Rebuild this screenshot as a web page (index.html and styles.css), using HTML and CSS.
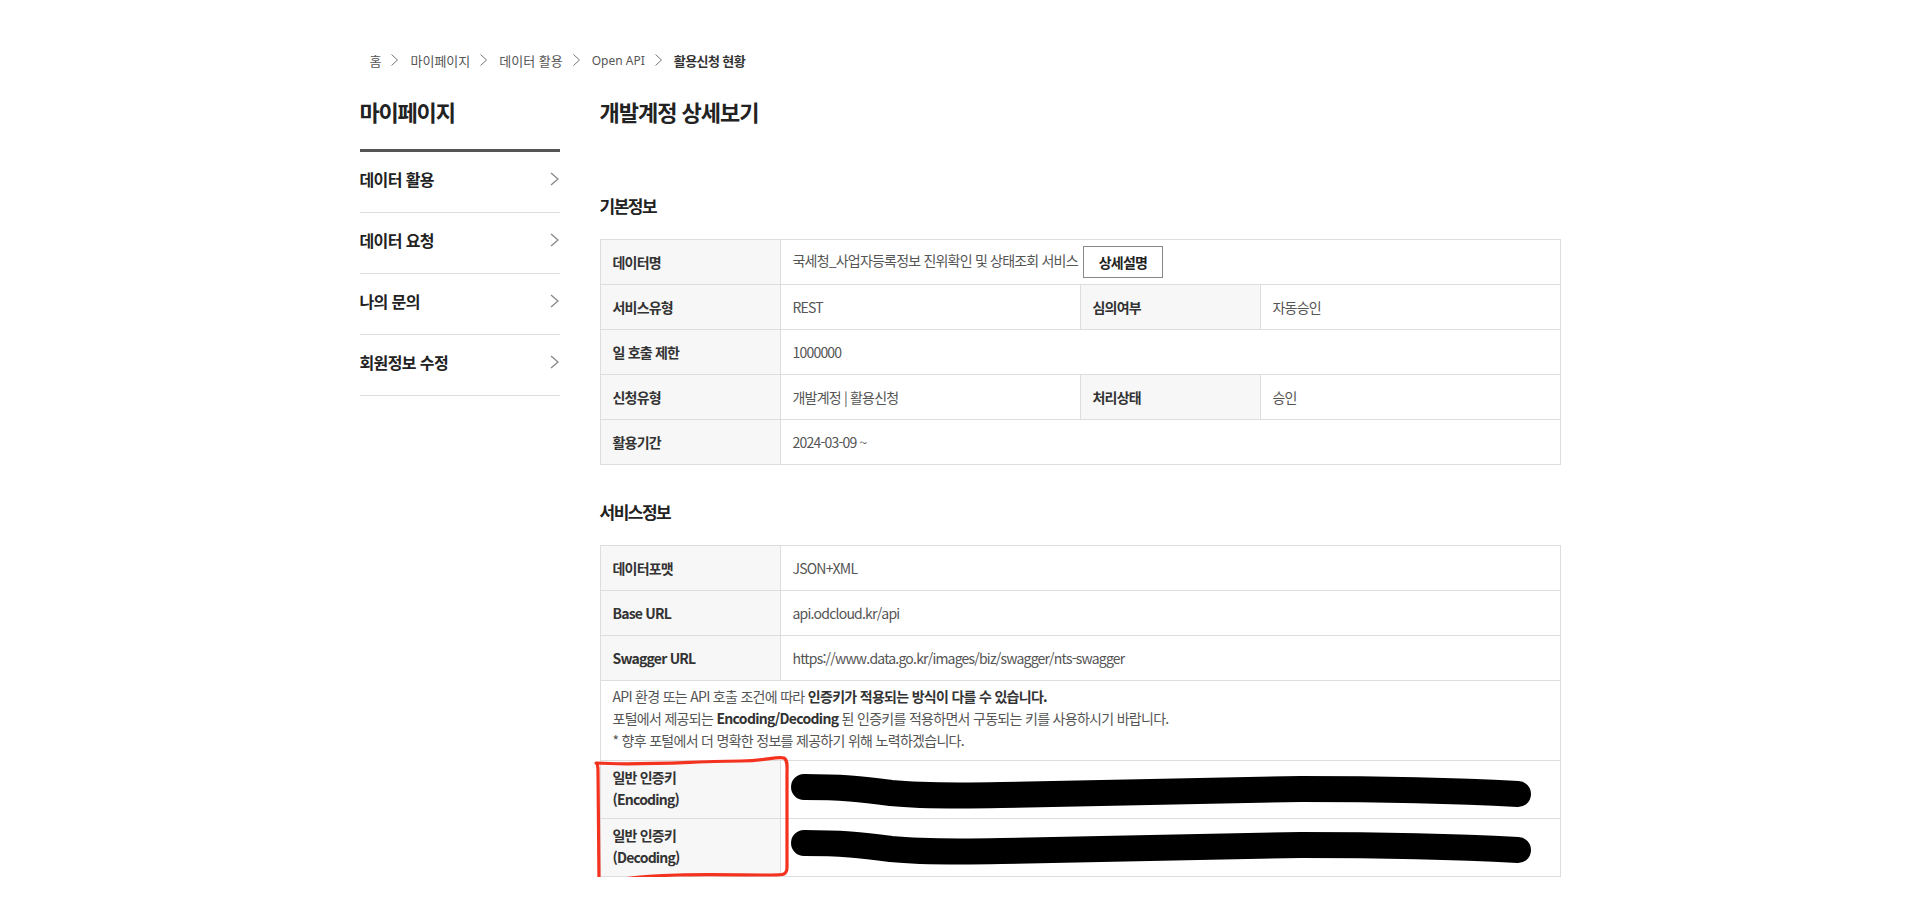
FILE: index.html
```html
<!DOCTYPE html>
<html lang="ko">
<head>
<meta charset="utf-8">
<title>개발계정 상세보기</title>
<link rel="stylesheet" href="styles.css">
</head>
<body>
<div class="wrap">
  <nav class="crumbs">
    <span>홈</span>
    <svg class="sep" viewBox="0 0 7 12"><path d="M0.5 0.5 L6.5 6 L0.5 11.5"/></svg>
    <span>마이페이지</span>
    <svg class="sep" viewBox="0 0 7 12"><path d="M0.5 0.5 L6.5 6 L0.5 11.5"/></svg>
    <span>데이터 활용</span>
    <svg class="sep" viewBox="0 0 7 12"><path d="M0.5 0.5 L6.5 6 L0.5 11.5"/></svg>
    <span class="latin">Open API</span>
    <svg class="sep" viewBox="0 0 7 12"><path d="M0.5 0.5 L6.5 6 L0.5 11.5"/></svg>
    <strong class="cur">활용신청 현황</strong>
  </nav>

  <div class="layout">
    <aside class="side">
      <h2 class="side-title">마이페이지</h2>
      <ul class="side-menu">
        <li><a href="#">데이터 활용<svg class="chev" viewBox="0 0 9 14"><path d="M1 1 L8 7 L1 13"/></svg></a></li>
        <li><a href="#">데이터 요청<svg class="chev" viewBox="0 0 9 14"><path d="M1 1 L8 7 L1 13"/></svg></a></li>
        <li><a href="#">나의 문의<svg class="chev" viewBox="0 0 9 14"><path d="M1 1 L8 7 L1 13"/></svg></a></li>
        <li><a href="#">회원정보 수정<svg class="chev" viewBox="0 0 9 14"><path d="M1 1 L8 7 L1 13"/></svg></a></li>
      </ul>
    </aside>

    <main class="main">
      <h1 class="page-title">개발계정 상세보기</h1>

      <h3 class="sec-title">기본정보</h3>
      <table class="info">
        <colgroup>
          <col class="c-label"><col class="c-val"><col class="c-label"><col class="c-val">
        </colgroup>
        <tbody>
          <tr>
            <th>데이터명</th>
            <td colspan="3">국세청_사업자등록정보 진위확인 및 상태조회 서비스 <button class="btn" type="button">상세설명</button></td>
          </tr>
          <tr>
            <th>서비스유형</th>
            <td>REST</td>
            <th>심의여부</th>
            <td>자동승인</td>
          </tr>
          <tr>
            <th>일 호출 제한</th>
            <td colspan="3">1000000</td>
          </tr>
          <tr>
            <th>신청유형</th>
            <td>개발계정 | 활용신청</td>
            <th>처리상태</th>
            <td>승인</td>
          </tr>
          <tr>
            <th>활용기간</th>
            <td colspan="3">2024-03-09 ~</td>
          </tr>
        </tbody>
      </table>

      <h3 class="sec-title next">서비스정보</h3>
      <div class="svc-wrap">
        <table class="info">
          <colgroup>
            <col class="c-label"><col class="c-wide">
          </colgroup>
          <tbody>
            <tr>
              <th>데이터포맷</th>
              <td>JSON+XML</td>
            </tr>
            <tr>
              <th>Base URL</th>
              <td>api.odcloud.kr/api</td>
            </tr>
            <tr>
              <th>Swagger URL</th>
              <td>https://www.data.go.kr/images/biz/swagger/nts-swagger</td>
            </tr>
            <tr>
              <td class="note" colspan="2">
                <p>API 환경 또는 API 호출 조건에 따라 <b>인증키가 적용되는 방식이 다를 수 있습니다.</b></p>
                <p>포털에서 제공되는 <b>Encoding/Decoding</b> 된 인증키를 적용하면서 구동되는 키를 사용하시기 바랍니다.</p>
                <p>* 향후 포털에서 더 명확한 정보를 제공하기 위해 노력하겠습니다.</p>
              </td>
            </tr>
            <tr class="key">
              <th>일반 인증키<br>(Encoding)</th>
              <td></td>
            </tr>
            <tr class="key">
              <th>일반 인증키<br>(Decoding)</th>
              <td></td>
            </tr>
          </tbody>
        </table>
        <svg class="marks" viewBox="0 0 960 345" aria-hidden="true">
          <path class="redact" d="M204,242 C241,242 261,244 291,248 C321,251 351,251 401,250 L701,244 C801,244 861,246 918,249"/>
          <path class="redact" transform="translate(0,56)" d="M204,242 C241,242 261,244 291,248 C321,251 351,251 401,250 L701,244 C801,244 861,246 918,249"/>
          <path class="circle" d="M-4,218 C40,221 100,216 141,216 C166,216 176,211 184,213 C188,215 187,222 187,230 L187,322 C187,330 184,330 171,330 C121,330 61,328 24,334 C6,338 0,341 -1,334 L-2,226 C-2,220 -3,218 -4,218 Z"/>
        </svg>
      </div>
    </main>
  </div>
</div>
</body>
</html>
```
FILE: styles.css
```css
* { box-sizing: border-box; }
html, body { margin: 0; padding: 0; background: #fff; }
body {
  font-family: "Noto Sans CJK KR", "Noto Sans", sans-serif;
  color: #333;
}
.wrap { width: 1200px; margin: 0 auto; }

/* breadcrumb */
.crumbs {
  display: flex;
  align-items: center;
  margin-top: 50px;
  height: 20px;
  padding-left: 10px;
  font-size: 13px;
  color: #555;
  letter-spacing: 0;
}
.crumbs .latin { font-family: "Noto Sans", "Noto Sans CJK KR", sans-serif; font-size: 12px; }
.crumbs .sep {
  width: 7px;
  height: 12px;
  margin: 0 12px 0 10px;
  fill: none;
  stroke: #777;
  stroke-width: 1;
}
.crumbs .cur { font-weight: 700; color: #333; letter-spacing: -0.6px; }

/* layout */
.layout { display: flex; gap: 40px; margin-top: 25px; }
.side { width: 200px; flex: none; }
.main { width: 960px; flex: none; }

/* sidebar */
.side-title {
  margin: 0;
  padding-bottom: 22px;
  border-bottom: 3px solid #555;
  font-size: 22px;
  line-height: 32px;
  font-weight: 700;
  letter-spacing: -1.2px;
  color: #222;
}
.side-menu { list-style: none; margin: 0; padding: 0; }
.side-menu li { border-bottom: 1px solid #ddd; }
.side-menu a {
  display: flex;
  justify-content: space-between;
  align-items: center;
  height: 60px;
  padding: 0 1px 6px 0;
  font-size: 16px;
  font-weight: 700;
  letter-spacing: -0.6px;
  color: #222;
  text-decoration: none;
}
.chev {
  width: 9px;
  height: 14px;
  fill: none;
  stroke: #8a8a8a;
  stroke-width: 1.4;
}

/* main */
.page-title {
  margin: 0;
  font-size: 22px;
  line-height: 32px;
  font-weight: 700;
  letter-spacing: -1px;
  color: #222;
}
.sec-title {
  margin: 67px 0 21px;
  font-size: 17px;
  line-height: 24px;
  font-weight: 700;
  letter-spacing: -1.5px;
  color: #222;
}
.sec-title.next { margin-top: 35px; }

/* tables */
.info {
  width: 960px;
  border-collapse: collapse;
  table-layout: fixed;
  font-size: 14px;
  letter-spacing: -0.8px;
}
.c-label { width: 180px; }
.c-val { width: 300px; }
.c-wide { width: 780px; }
.info th, .info td {
  border: 1px solid #ddd;
  height: 45px;
  padding: 0 12px;
  text-align: left;
  vertical-align: middle;
}
.info th {
  background: #f7f7f7;
  font-weight: 700;
  color: #333;
}
.info td { font-weight: 400; color: #555; }

.btn {
  display: inline-block;
  width: 80px;
  height: 32px;
  margin-left: 2px;
  padding: 0;
  border: 1px solid #888;
  background: #fff;
  font-family: inherit;
  font-size: 14px;
  font-weight: 700;
  letter-spacing: -0.8px;
  color: #222;
  vertical-align: middle;
}

.info td.note {
  padding: 4px 12px 9px;
  line-height: 22px;
  letter-spacing: -0.7px;
}
.note p { margin: 0; }
.note b { font-weight: 700; color: #333; }

.info .key th {
  height: 58px;
  padding: 5px 12px 8px;
  line-height: 22px;
}
.info .key td { background: #fff; }

/* overlay markings */
.svc-wrap { position: relative; }
.marks {
  position: absolute;
  left: 0;
  top: 0;
  width: 960px;
  height: 345px;
  overflow: visible;
  pointer-events: none;
}
.redact {
  fill: none;
  stroke: #000;
  stroke-width: 26;
  stroke-linecap: round;
  stroke-linejoin: round;
}
.circle {
  fill: none;
  stroke: #f3321f;
  stroke-width: 3.2;
  stroke-linejoin: round;
}
```
